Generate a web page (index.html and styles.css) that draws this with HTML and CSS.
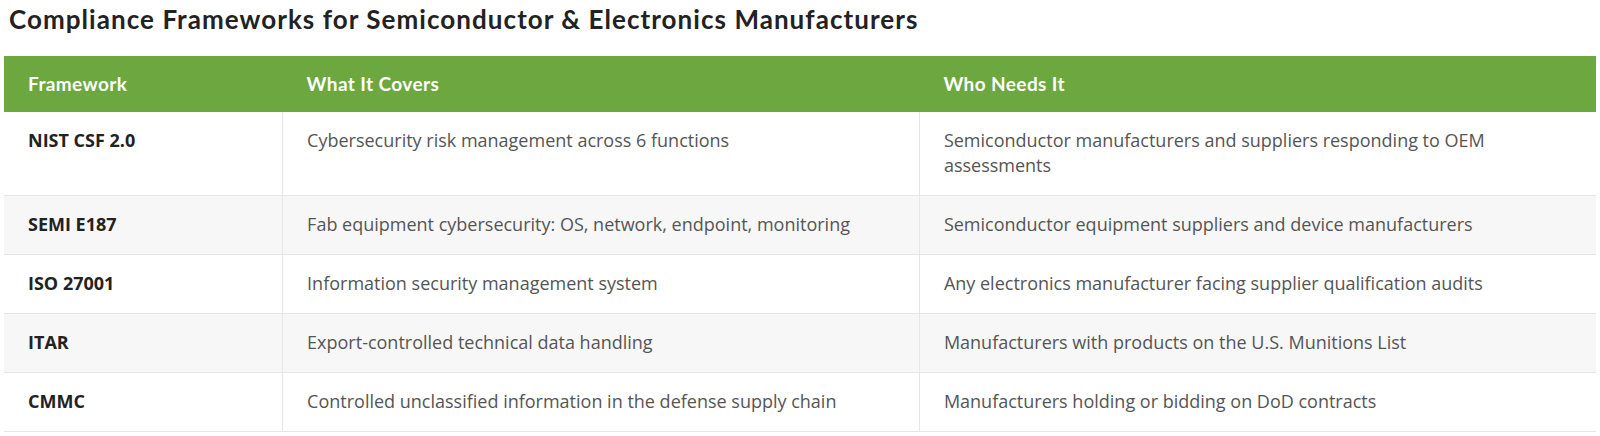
FILE: index.html
```html
<!DOCTYPE html>
<html lang="en">
<head>
<meta charset="utf-8">
<title>Compliance Frameworks</title>
<link rel="stylesheet" href="styles.css">
</head>
<body>
<div class="page">
  <h2 class="title">Compliance Frameworks for Semiconductor &amp; Electronics Manufacturers</h2>
  <table class="grid">
    <colgroup>
      <col class="c1"><col class="c2"><col class="c3">
    </colgroup>
    <thead>
      <tr><th>Framework</th><th>What It Covers</th><th>Who Needs It</th></tr>
    </thead>
    <tbody>
      <tr><td class="name">NIST CSF 2.0</td><td>Cybersecurity risk management across 6 functions</td><td>Semiconductor manufacturers and suppliers responding to OEM assessments</td></tr>
      <tr class="alt"><td class="name">SEMI E187</td><td>Fab equipment cybersecurity: OS, network, endpoint, monitoring</td><td>Semiconductor equipment suppliers and device manufacturers</td></tr>
      <tr><td class="name">ISO 27001</td><td>Information security management system</td><td>Any electronics manufacturer facing supplier qualification audits</td></tr>
      <tr class="alt"><td class="name">ITAR</td><td>Export-controlled technical data handling</td><td>Manufacturers with products on the U.S. Munitions List</td></tr>
      <tr><td class="name">CMMC</td><td>Controlled unclassified information in the defense supply chain</td><td>Manufacturers holding or bidding on DoD contracts</td></tr>
    </tbody>
  </table>
</div>
</body>
</html>
```
FILE: styles.css
```css
html, body {
  margin: 0;
  padding: 0;
  background: #ffffff;
}
.page {
  padding: 3px 4px 0 4px;
}
.title {
  font-family: Lato, "Liberation Sans", sans-serif;
  font-weight: 700;
  font-size: 26px;
  letter-spacing: 1.05px;
  line-height: 32px;
  color: #222222;
  margin: 0 0 21px 5px;
}
.grid {
  width: 100%;
  border-collapse: collapse;
  table-layout: fixed;
}
.c1 { width: 17.5%; }
.c2 { width: 40%; }
.c3 { width: 42.5%; }
.grid th {
  background: #6ca73f;
  color: #ffffff;
  font-family: Lato, "Liberation Sans", sans-serif;
  font-weight: 700;
  font-size: 19px;
  letter-spacing: 0.4px;
  line-height: 24px;
  text-align: left;
  padding: 16px 24px;
}
.grid td {
  font-family: "Open Sans", "Liberation Sans", sans-serif;
  font-size: 18px;
  line-height: 25px;
  color: #555555;
  padding: 16px 24px 17px 24px;
  vertical-align: top;
  border-bottom: 1px solid #e6e6e6;
  border-left: 1px solid #e6e6e6;
}
.grid td:first-child {
  border-left: none;
}
.grid td.name {
  font-weight: 700;
  color: #222222;
}
.grid tr.alt td {
  background: #f7f7f7;
}
```
